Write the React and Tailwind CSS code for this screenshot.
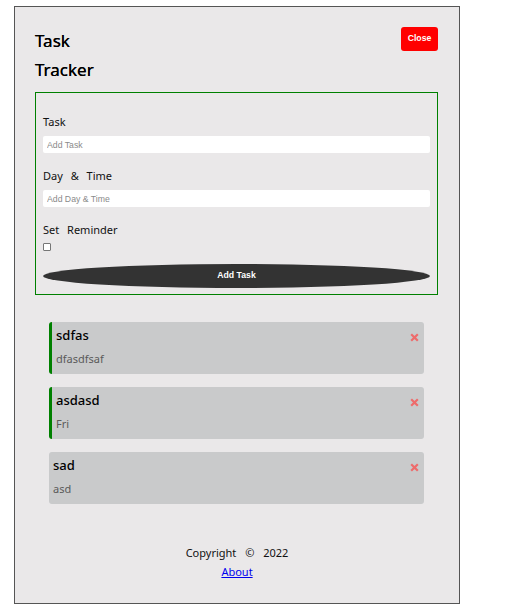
import React from "react";

const tasks = [
  { title: "sdfas", day: "dfasdfsaf", reminder: true },
  { title: "asdasd", day: "Fri", reminder: true },
  { title: "sad", day: "asd", reminder: false },
];

function XIcon() {
  return (
    <svg width="9" height="9" viewBox="0 0 9 9" className="shrink-0">
      <path d="M1.2 1.2 L7.8 7.8 M7.8 1.2 L1.2 7.8" stroke="#ee6b6b" strokeWidth="2.2" strokeLinecap="butt" />
    </svg>
  );
}

export default function App() {
  return (
    <div className="min-h-[611px] bg-white pt-[6px] pl-[14px]">
      <div className="w-[446px] h-[598px] border border-[#555] bg-[#eae8e9] px-5 flex flex-col [font-family:'Noto_Sans',sans-serif]">
        <div className="flex justify-between items-start pt-[19px] pr-[1px]">
          <h1 className="text-[17px] leading-[29px] text-black w-[80px] [text-shadow:0_0_0.3px_#000]">Task Tracker</h1>
          <button className="mt-[1px] w-[37px] h-[24px] rounded-[3px] bg-[#ff0000] text-white font-bold text-[8.7px] [font-family:'Liberation_Sans',Arial,sans-serif]">
            Close
          </button>
        </div>

        <form className="mt-[8px] w-[403px] border border-[#008000] px-[7px] pt-[21px] pb-[6px] flex flex-col">
          <label className="text-[11px] leading-[15px] text-[#111] [word-spacing:5px]">Task</label>
          <input
            placeholder="Add Task"
            className="mt-[7px] h-[17px] w-full rounded-[2px] bg-white px-[4px] text-[8.7px] outline-none placeholder:text-[#8a8a8a] [font-family:'Liberation_Sans',Arial,sans-serif]"
          />
          <label className="mt-[15px] text-[11px] leading-[15px] text-[#111] [word-spacing:5px]">Day &amp; Time</label>
          <input
            placeholder="Add Day & Time"
            className="mt-[7px] h-[17px] w-full rounded-[2px] bg-white px-[4px] text-[8.7px] outline-none placeholder:text-[#8a8a8a] [font-family:'Liberation_Sans',Arial,sans-serif]"
          />
          <label className="mt-[15px] text-[11px] leading-[15px] text-[#111] [word-spacing:5px]">Set Reminder</label>
          <div className="mt-[6px] w-[8px] h-[8px] border border-[#767676] bg-white rounded-[1px]"></div>
          <button
            type="button"
            className="mt-[13px] h-[24px] w-full rounded-[50%] bg-[#333333] text-white font-bold text-[8.7px] [font-family:'Liberation_Sans',Arial,sans-serif]"
          >
            Add Task
          </button>
        </form>

        <div className="mt-[27px] ml-[14px] w-[375px] flex flex-col gap-[13px]">
          {tasks.map((t) => (
            <div
              key={t.title}
              className={`h-[52px] rounded-[3px] bg-[#c9cacb] pt-[4px] pr-[5px] ${
                t.reminder ? "border-l-[3px] border-[#008000] pl-[4px]" : "pl-[4px]"
              }`}
            >
              <div className="flex justify-between items-center h-[18px]">
                <span className="text-[13px] leading-[18px] text-black font-medium">{t.title}</span>
                <span className="mt-[4px]">
                  <XIcon />
                </span>
              </div>
              <div className="mt-[7px] text-[11px] leading-[15px] text-[#5a5a5a]">{t.day}</div>
            </div>
          ))}
        </div>

        <footer className="mt-[41px] flex flex-col items-center text-[11px] leading-[15px] text-[#111]">
          <p className="[word-spacing:6px]">Copyright © 2022</p>
          <a href="#" className="mt-[4px] text-[#0000ee] underline">About</a>
        </footer>
      </div>
    </div>
  );
}
